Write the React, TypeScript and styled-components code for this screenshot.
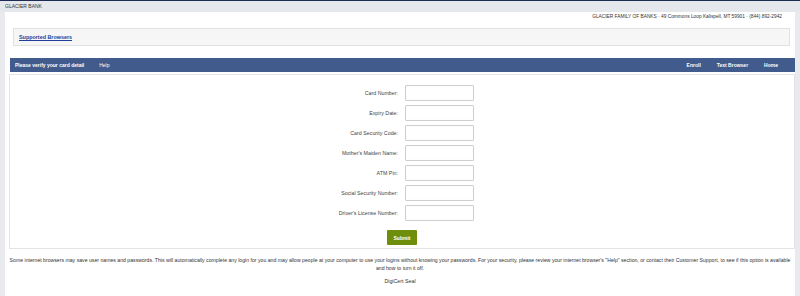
import React from 'react';
import styled, { createGlobalStyle } from 'styled-components';

const GlobalStyle = createGlobalStyle`
  html, body {
    margin: 0;
    padding: 0;
    background: #e8eaee;
    font-family: "Liberation Sans", Arial, sans-serif;
    color: #333;
  }
`;

const TopBar = styled.div`
  height: 11px;
  border-top: 1px solid #1d2c55;
  background: #e4e7ec;
  font-size: 5px;
  line-height: 11px;
  padding-left: 5px;
  color: #333;
`;

const Page = styled.div`
  margin: 0 5px;
  background: #fff;
  min-height: 284px;
  display: flex;
  flex-direction: column;
`;

const Address = styled.div`
  text-align: right;
  font-size: 4.8px;
  padding: 2px 13px 0 0;
  height: 10px;
  color: #333;
`;

const BrowserBox = styled.div`
  margin: 4px 5px 0 8px;
  height: 16px;
  background: #f6f6f6;
  border: 1px solid #e2e2e2;
  display: flex;
  align-items: center;
  padding-left: 5px;
`;

const BrowserLink = styled.a`
  font-size: 5.4px;
  font-weight: bold;
  color: #1d3f99;
  text-decoration: underline;
`;

const NavBar = styled.div`
  margin: 12px 0 0 5px;
  height: 14px;
  background: #405b8c;
  display: flex;
  align-items: center;
  padding: 0 0 0 5px;
`;

const NavItem = styled.span<{ $bold?: boolean; $gap?: number }>`
  color: #fff;
  font-size: 5px;
  font-weight: ${p => (p.$bold ? 'bold' : 'normal')};
  margin-right: ${p => p.$gap ?? 0}px;
`;

const NavSpacer = styled.div`
  flex: 1;
`;

const FormPanel = styled.div`
  margin: 2px 0 0 4px;
  border: 1px solid #e4e4e4;
  padding: 10px 0 3px;
  display: flex;
  flex-direction: column;
  align-items: center;
`;

const FormGrid = styled.div`
  display: grid;
  grid-template-columns: 68px 69px;
  column-gap: 7px;
  row-gap: 4px;
  align-items: center;
`;

const Label = styled.label`
  font-size: 5.3px;
  text-align: right;
  color: #444;
`;

const Input = styled.input`
  box-sizing: border-box;
  width: 69px;
  height: 16px;
  border: 1px solid #cfcfcf;
  border-radius: 1px;
  background: #fff;
  box-shadow: inset 0 0 1px rgba(0, 0, 0, 0.08);
  margin: 0;
  padding: 0;
`;

const SubmitButton = styled.button`
  margin-top: 9px;
  width: 30px;
  height: 15px;
  background: #6e8e0c;
  border: none;
  border-radius: 1px;
  color: #fff;
  font-family: "Liberation Sans", Arial, sans-serif;
  font-size: 5px;
  font-weight: bold;
  padding: 0;
`;

const Disclaimer = styled.p`
  margin: 8px 2px 0 2px;
  font-size: 5.17px;
  line-height: 7.5px;
  text-align: center;
  color: #333;
`;

const Seal = styled.div`
  margin-top: 6px;
  font-size: 5.3px;
  text-align: center;
  color: #333;
`;

const fields = [
  'Card Number:',
  'Expiry Date:',
  'Card Security Code:',
  "Mother's Maiden Name:",
  'ATM Pin:',
  'Social Security Number:',
  "Driver's License Number:",
];

export default function App() {
  return (
    <>
      <GlobalStyle />
      <TopBar>GLACIER BANK</TopBar>
      <Page>
        <Address>
          GLACIER FAMILY OF BANKS · 49 Commons Loop Kalispell, MT 59901 · (844) 892-2942
        </Address>
        <BrowserBox>
          <BrowserLink href="#">Supported Browsers</BrowserLink>
        </BrowserBox>
        <NavBar>
          <NavItem $bold $gap={15}>Please verify your card detail</NavItem>
          <NavItem>Help</NavItem>
          <NavSpacer />
          <NavItem $bold $gap={16}>Enroll</NavItem>
          <NavItem $bold $gap={16}>Text Browser</NavItem>
          <NavItem $bold $gap={17}>Home</NavItem>
        </NavBar>
        <FormPanel>
          <FormGrid>
            {fields.map(f => (
              <React.Fragment key={f}>
                <Label>{f}</Label>
                <Input type="text" />
              </React.Fragment>
            ))}
          </FormGrid>
          <SubmitButton>Submit</SubmitButton>
        </FormPanel>
        <Disclaimer>
          Some internet browsers may save user names and passwords. This will automatically complete any login for you and may allow people at your computer to use your logins without knowing your passwords. For your security, please review your internet browser's "Help" section, or contact their Customer Support, to see if this option is available
          <br />
          and how to turn it off.
        </Disclaimer>
        <Seal>DigiCert Seal</Seal>
      </Page>
    </>
  );
}
